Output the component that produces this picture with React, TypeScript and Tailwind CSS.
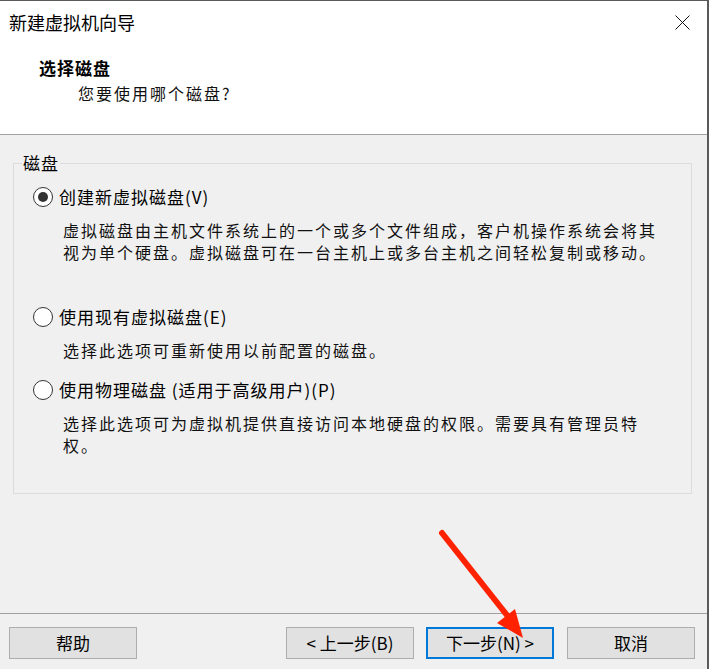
import React from "react";

const font = { fontFamily: '"Noto Sans CJK SC", "Noto Sans", sans-serif' };

function Radio({ checked }: { checked?: boolean }) {
  return (
    <span className="w-[20px] h-[20px] shrink-0 rounded-full border-[1.5px] border-[#333] bg-white flex items-center justify-center">
      {checked && <span className="w-[10px] h-[10px] rounded-full bg-[#333]" />}
    </span>
  );
}

function Option({
  label,
  lines,
  checked,
  className,
}: {
  label: string;
  lines: string[];
  checked?: boolean;
  className?: string;
}) {
  return (
    <div className={className}>
      <div className="flex items-center gap-[6px] h-[24px] text-[17px] tracking-[1px] text-black">
        <Radio checked={checked} />
        <span>{label}</span>
      </div>
      <div className="mt-[10px] pl-[30px] text-[16px] leading-[22px] tracking-[2px] text-[#111]">
        {lines.map((l) => (
          <div key={l} className="whitespace-nowrap">
            {l}
          </div>
        ))}
      </div>
    </div>
  );
}

function Button({ children, focused }: { children: React.ReactNode; focused?: boolean }) {
  return (
    <button
      className={
        "w-[128px] h-[32px] bg-[#e1e1e1] text-[17px] text-black flex items-center justify-center " +
        (focused ? "border-2 border-[#0078d7]" : "border border-[#adadad]")
      }
    >
      {children}
    </button>
  );
}

export default function App() {
  return (
    <div
      className="relative w-[709px] h-[669px] bg-[#f0f0f0] border-t border-r-2 border-[#5a5a5a] flex flex-col overflow-hidden"
      style={font}
    >
      <div className="h-[134px] bg-white border-b border-[#a0a0a0] flex flex-col">
        <div className="h-[43px] flex items-center justify-between pl-[9px] pr-[17px]">
          <span className="text-[18px] text-black">新建虚拟机向导</span>
          <svg width="15" height="15" viewBox="0 0 15 15">
            <path d="M0.5 0.5 L14.5 14.5 M14.5 0.5 L0.5 14.5" stroke="#111" strokeWidth="1" fill="none" />
          </svg>
        </div>
        <div className="mt-[12px] pl-[39px] text-[17px] leading-[24px] font-bold tracking-[1px] text-black">
          选择磁盘
        </div>
        <div className="mt-[1px] pl-[78px] text-[16px] leading-[24px] tracking-[2px] text-[#111]">
          您要使用哪个磁盘?
        </div>
      </div>

      <div className="flex-1">
        <div className="relative mt-[28px] ml-[13px] mr-[15px] h-[331px] border border-[#dcdcdc] pl-[19px] pt-[21px]">
          <span className="absolute -top-[12px] left-[8px] px-[1px] bg-[#f0f0f0] text-[17px] leading-[22px] tracking-[1px] text-black">
            磁盘
          </span>
          <Option
            checked
            label="创建新虚拟磁盘(V)"
            lines={[
              "虚拟磁盘由主机文件系统上的一个或多个文件组成，客户机操作系统会将其",
              "视为单个硬盘。虚拟磁盘可在一台主机上或多台主机之间轻松复制或移动。",
            ]}
          />
          <Option
            className="mt-[42px]"
            label="使用现有虚拟磁盘(E)"
            lines={["选择此选项可重新使用以前配置的磁盘。"]}
          />
          <Option
            className="mt-[17px]"
            label="使用物理磁盘 (适用于高级用户)(P)"
            lines={["选择此选项可为虚拟机提供直接访问本地硬盘的权限。需要具有管理员特", "权。"]}
          />
        </div>
      </div>

      <div className="h-[56px] border-t border-[#a0a0a0] pt-[13px] pl-[9px] pr-[12px] flex items-start">
        <Button>帮助</Button>
        <div className="flex-1" />
        <Button>&lt; 上一步(B)</Button>
        <div className="w-[12px]" />
        <Button focused>下一步(N) &gt;</Button>
        <div className="w-[13px]" />
        <Button>取消</Button>
      </div>

      <svg className="absolute inset-0 pointer-events-none" width="709" height="669" viewBox="0 0 709 669">
        <line x1="442" y1="532" x2="510" y2="618" stroke="#ff2200" strokeWidth="6" strokeLinecap="round" />
        <polygon points="523,637 497,622 515,608" fill="#ff2200" />
      </svg>
    </div>
  );
}
